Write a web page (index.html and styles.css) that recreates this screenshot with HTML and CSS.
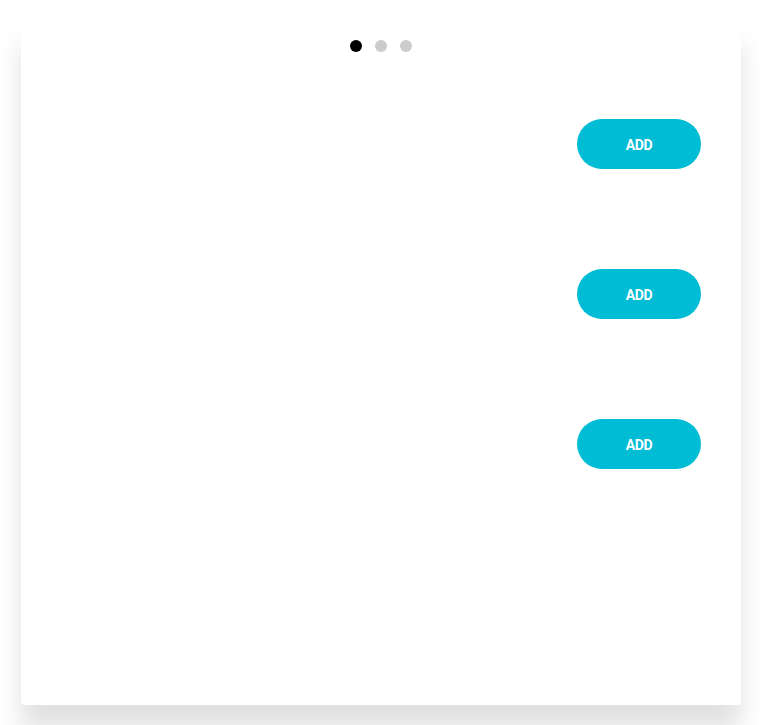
FILE: index.html
```html
<!DOCTYPE html>
<html lang="en">
<head>
<meta charset="utf-8">
<title>Carousel</title>
<link rel="stylesheet" href="styles.css">
</head>
<body>
<div class="card">
  <div class="dots">
    <span class="dot active"></span>
    <span class="dot"></span>
    <span class="dot"></span>
  </div>
  <div class="row"><button class="add">ADD</button></div>
  <div class="row"><button class="add">ADD</button></div>
  <div class="row"><button class="add">ADD</button></div>
</div>
</body>
</html>
```
FILE: styles.css
```css
html, body {
  margin: 0;
  padding: 0;
  background: #ffffff;
}
body {
  padding: 20px 19px 0 21px;
  font-family: Roboto, "Liberation Sans", sans-serif;
  height: 725px;
  box-sizing: border-box;
  overflow: hidden;
}
.card {
  background: #ffffff;
  height: 685px;
  border-radius: 4px;
  box-shadow: 0 24px 24px rgba(0, 0, 0, 0.12);
  padding-top: 20px;
  box-sizing: border-box;
}
.dots {
  display: flex;
  justify-content: center;
  gap: 13px;
  height: 12px;
  margin-bottom: 17px;
}
.dot {
  width: 12px;
  height: 12px;
  border-radius: 50%;
  background: #cccccc;
}
.dot.active {
  background: #000000;
}
.row {
  height: 150px;
  display: flex;
  align-items: center;
  justify-content: flex-end;
  padding-right: 40px;
}
.add {
  width: 124px;
  height: 50px;
  border: none;
  border-radius: 25px;
  background: #00bcd4;
  color: #ffffff;
  font-family: Roboto, "Liberation Sans", sans-serif;
  font-weight: 700;
  font-size: 14px;
  letter-spacing: -0.3px;
  padding: 1px 0 0;
  cursor: pointer;
}
```
